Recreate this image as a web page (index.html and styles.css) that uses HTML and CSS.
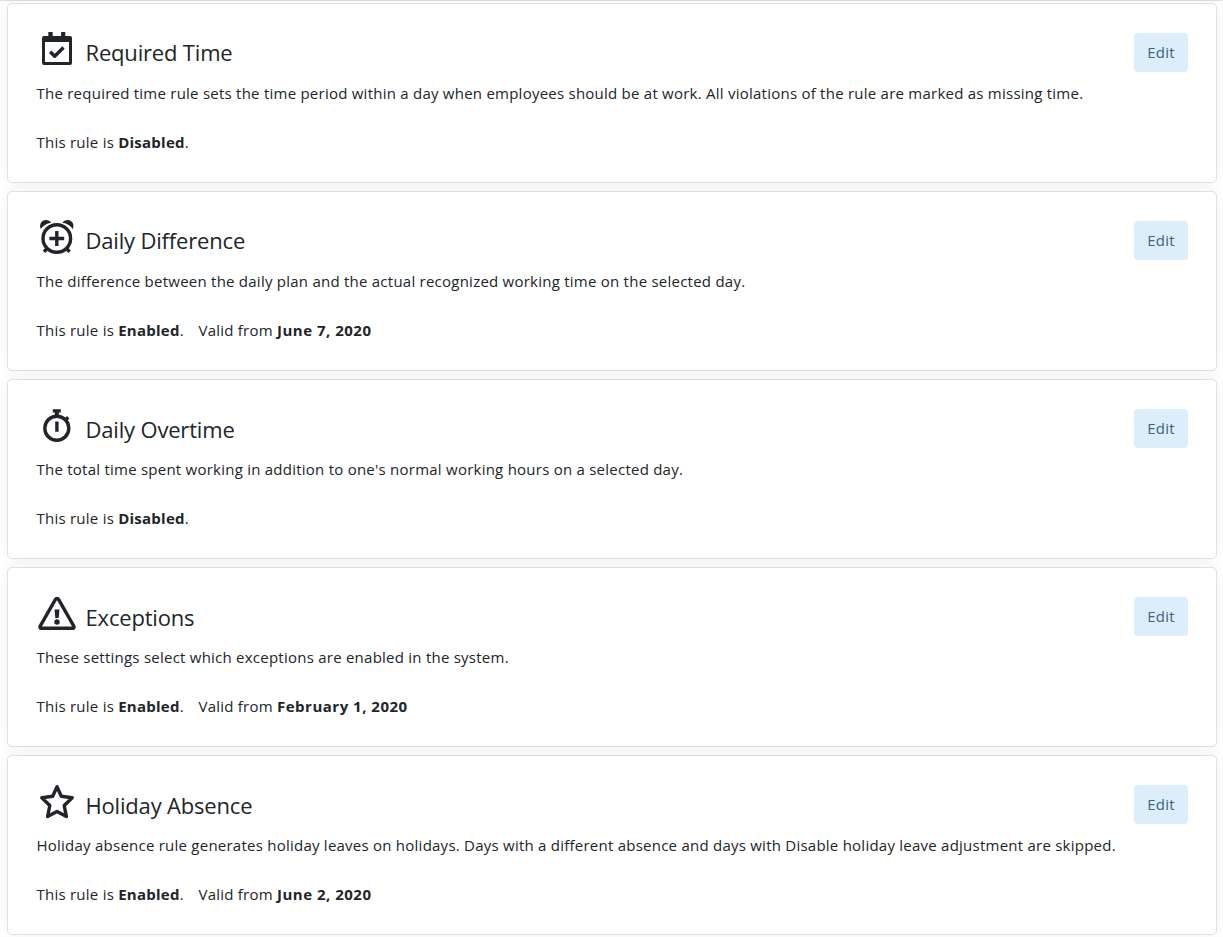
FILE: index.html
```
<!DOCTYPE html>
<html lang="en">

<head>
  <meta charset="UTF-8">
  <meta name="viewport" content="width=device-width, initial-scale=1.0">
  <title>Rules</title>
  <link rel="stylesheet" href="styles.css">
</head>

<body>
  <div class="rules">
    <div class="card">
      <div class="card-header">
        <svg class="icon" viewBox="0 0 40 40">
          <path fill-rule="evenodd" d="M11.3 3h4.4v4h8.4V3h4.2v4H33a2 2 0 0 1 2 2v25a2 2 0 0 1-2 2H7a2 2 0 0 1-2-2V9a2 2 0 0 1 2-2h4.3zM8 13v20h24V13z"/>
          <path class="line" d="M13.2 22.8l4.5 4.5 8.8-8.8"/>
        </svg>
        <h2>Required Time</h2>
        <button class="btn">Edit</button>
      </div>
      <p class="description">The required time rule sets the time period within a day when employees should be at work. All violations of the rule are marked as missing time.</p>
      <p class="status">This rule is <b>Disabled</b>.</p>
    </div>

    <div class="card">
      <div class="card-header">
        <svg class="icon" viewBox="0 0 40 40">
          <circle class="line" cx="19.8" cy="21.5" r="13.8"/>
          <path class="line" d="M12.4 21.5h14.8M19.8 14.1v14.8M10 31.5l-3 3.3M29.6 31.5l3 3.3"/>
          <path d="M3.8 12C1.7 7.5 4.5 3 9 3c2.2 0 4 .9 5.1 2.8C9.5 6.5 6 9 3.8 12zM35.8 12C37.9 7.5 35.1 3 30.6 3c-2.2 0-4 .9-5.1 2.8C30.1 6.5 33.6 9 35.8 12z"/>
        </svg>
        <h2>Daily Difference</h2>
        <button class="btn">Edit</button>
      </div>
      <p class="description">The difference between the daily plan and the actual recognized working time on the selected day.</p>
      <p class="status">This rule is <b>Enabled</b>. <span class="valid">Valid from <b>June 7, 2020</b></span></p>
    </div>

    <div class="card">
      <div class="card-header">
        <svg class="icon" viewBox="0 0 40 40">
          <circle class="line" cx="19.8" cy="23.3" r="12"/>
          <path d="M15.8 4.2h8v3.2h-2v4h-4v-4h-2z"/>
          <path class="line" d="M28.3 15.2l2.9-2.9M19.9 16.5v10.2"/>
        </svg>
        <h2>Daily Overtime</h2>
        <button class="btn">Edit</button>
      </div>
      <p class="description">The total time spent working in addition to one's normal working hours on a selected day.</p>
      <p class="status">This rule is <b>Disabled</b>.</p>
    </div>

    <div class="card">
      <div class="card-header">
        <svg class="icon" viewBox="0 0 40 40">
          <path class="line" d="M18.6 6.2L3.2 33.2c-.6 1 0 2 1 2h31.6c1 0 1.6-1 1-2L21.4 6.2c-.6-1-2.2-1-2.8 0z"/>
          <path d="M17.5 16.5h5l-.8 8.5h-3.4z"/>
          <circle cx="20" cy="29" r="2.7"/>
        </svg>
        <h2>Exceptions</h2>
        <button class="btn">Edit</button>
      </div>
      <p class="description">These settings select which exceptions are enabled in the system.</p>
      <p class="status">This rule is <b>Enabled</b>. <span class="valid">Valid from <b>February 1, 2020</b></span></p>
    </div>

    <div class="card">
      <div class="card-header">
        <svg class="icon" viewBox="0 0 40 40">
          <path class="line" d="M20 5.7l4.3 9.5 10.9 1.5-8 7.8 2.2 11L20 30.4l-9.4 5.1 2.2-11-8-7.8 10.9-1.5z"/>
        </svg>
        <h2>Holiday Absence</h2>
        <button class="btn">Edit</button>
      </div>
      <p class="description">Holiday absence rule generates holiday leaves on holidays. Days with a different absence and days with Disable holiday leave adjustment are skipped.</p>
      <p class="status">This rule is <b>Enabled</b>. <span class="valid">Valid from <b>June 2, 2020</b></span></p>
    </div>
  </div>
</body>

</html>
```
FILE: styles.css
```
* {
  margin: 0;
  padding: 0;
  box-sizing: border-box;
}

body {
  font-family: 'Segoe UI', 'Open Sans', sans-serif;
  font-size: 15px;
  line-height: 24px;
  letter-spacing: 0.24px;
  color: #212529;
  background: #fff;
  overflow: hidden;
}

.rules {
  display: flex;
  flex-direction: column;
  gap: 8px;
  padding: 2px 6px 2px 7px;
  border-top: 1px solid #dfdfdf;
}

.card {
  height: 180px;
  padding: 29px 28px 0 28.5px;
  background: #fff;
  border: 1px solid #dfdfdf;
  border-radius: 5px;
  box-shadow: 0 0 20px rgba(0, 0, 0, 0.05);
}

.card-header {
  display: flex;
  align-items: flex-start;
  height: 39px;
}

.icon {
  width: 40px;
  height: 40px;
  margin: -4px 8.5px 0 0.5px;
  fill: #212529;
}

.icon .line {
  fill: none;
  stroke: #212529;
  stroke-width: 3.4;
  stroke-linejoin: round;
}

.card-header h2 {
  flex: 1;
  font-size: 22px;
  font-weight: 400;
  line-height: 39px;
  letter-spacing: -0.18px;
}

.card:nth-child(n+3) h2 {
  line-height: 41px;
}

.btn {
  width: 54px;
  height: 39px;
  padding-bottom: 1px;
  border: none;
  border-radius: 4px;
  background: #dceefa;
  color: #3d6480;
  font-family: inherit;
  font-size: 15px;
  letter-spacing: 0.24px;
  cursor: pointer;
}

.description {
  margin-top: 9px;
  white-space: nowrap;
}

.status {
  margin-top: 25px;
}

.valid {
  margin-left: 10.5px;
}

.valid b {
  letter-spacing: 0.5px;
}
```
